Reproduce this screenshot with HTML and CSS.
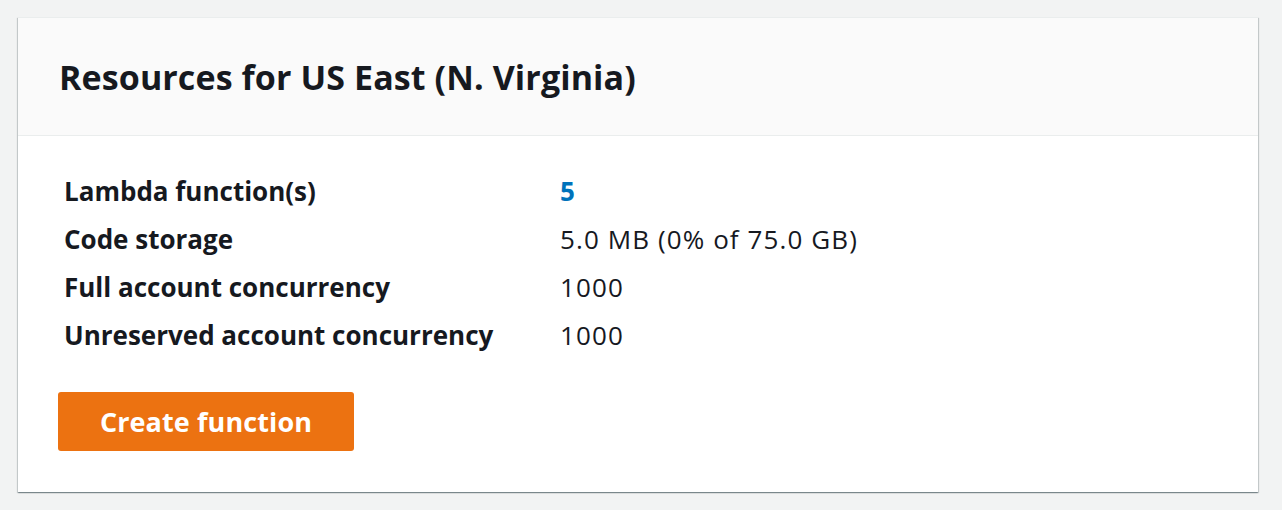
FILE: index.html
```html
<!DOCTYPE html>
<html lang="en">
<head>
    <meta charset="UTF-8">
    <meta name="viewport" content="width=device-width, initial-scale=1.0">
    <title>Lambda Dashboard</title>
    <link rel="stylesheet" href="styles.css">
</head>
<body>
    <div class="panel">
        <div class="panel-header">
            <h2>Resources for US East (N. Virginia)</h2>
        </div>

        <div class="panel-body">
            <div class="resource-list">
                <div class="label">Lambda function(s)</div>
                <div class="value"><a href="#">5</a></div>
                <div class="label">Code storage</div>
                <div class="value">5.0 MB (0% of 75.0 GB)</div>
                <div class="label">Full account concurrency</div>
                <div class="value">1000</div>
                <div class="label">Unreserved account concurrency</div>
                <div class="value">1000</div>
            </div>

            <button class="create-btn">Create function</button>
        </div>
    </div>
</body>
</html>
```

FILE: styles.css
```css
/* Page */
body {
    font-family: "Open Sans", Arial, sans-serif;
    margin: 0;
    padding: 17px 24px 18px 18px;
    background-color: #f2f3f3;
    color: #16191f;
}

/* Card */
.panel {
    background-color: #ffffff;
    box-shadow: 0 1px 1px 0 rgba(0, 28, 36, 0.3),
                1px 1px 1px 0 rgba(0, 28, 36, 0.15),
                -1px 1px 1px 0 rgba(0, 28, 36, 0.15);
    border-top: 1px solid #eaeded;
}

.panel-header {
    background-color: #fafafa;
    border-bottom: 1px solid #eaeded;
    height: 117px;
    padding: 0 41px;
    display: flex;
    align-items: center;
}

.panel-header h2 {
    margin: 0;
    font-size: 34px;
    font-weight: 700;
    letter-spacing: 0.1px;
}

.panel-body {
    padding: 31px 40px 41px 40px;
}

/* Key / value rows */
.resource-list {
    display: grid;
    grid-template-columns: 496px auto;
    line-height: 48px;
    font-size: 26px;
    margin-left: 6px;
}

.label {
    font-weight: 700;
}

.value {
    letter-spacing: 1.1px;
}

.value a {
    color: #0073bb;
    font-weight: 700;
    text-decoration: none;
}

/* Primary button */
.create-btn {
    margin-top: 33px;
    width: 296px;
    height: 59px;
    background-color: #ec7211;
    border: none;
    border-radius: 3px;
    color: white;
    font-family: inherit;
    font-size: 27px;
    font-weight: 700;
    letter-spacing: 0.1px;
    cursor: pointer;
}

.create-btn:hover {
    background-color: #eb5f07;
}
```
